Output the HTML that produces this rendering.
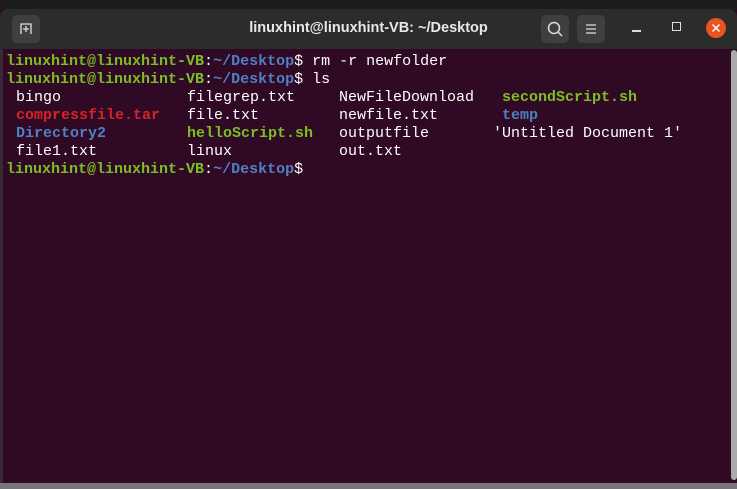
<!DOCTYPE html><html><head><style>
body{margin:0;width:737px;height:489px;overflow:hidden;background:#300a24;position:relative;font-family:"Liberation Sans",sans-serif}
.top{position:absolute;left:0;top:0;width:737px;height:9px;background:#1d1d1d}
.tb{position:absolute;left:0;top:9px;width:737px;height:40px;background:#2c2c2c;border-radius:8px 8px 0 0}
.title{position:absolute;left:0;width:737px;top:20px;text-align:center;color:#e8e8e8;font-weight:bold;font-size:14.5px}
.btn{position:absolute;top:15px;width:28px;height:28px;background:#3f3f3f;border-radius:5px}
.t{position:absolute;left:6px;font-family:"Liberation Mono",monospace;font-size:15px;color:#fff;white-space:pre;line-height:18px}
.t span{position:absolute}
.l span{position:static}
.g{color:#7bbd25;font-weight:bold}.b{color:#4f7fc4;font-weight:bold}.r{color:#d4242a;font-weight:bold}
</style></head><body>
<div class="top"></div>
<div class="tb"></div>
<div class="btn" style="left:12px;top:15px"><svg width="28" height="28"><path d="M9 19V9h10v10M14 11v6M11 14h6" stroke="#ddd" stroke-width="1.3" fill="none"/></svg></div>
<div class="title">linuxhint@linuxhint-VB: ~/Desktop</div>
<div class="btn" style="left:541px"><svg width="28" height="28"><circle cx="13" cy="13" r="5.5" stroke="#ddd" stroke-width="1.5" fill="none"/><path d="M17 17l4 4" stroke="#ddd" stroke-width="1.5"/></svg></div>
<div class="btn" style="left:577px"><svg width="28" height="28"><path d="M9 10h10M9 14h10M9 18h10" stroke="#ddd" stroke-width="1.3"/></svg></div>
<div style="position:absolute;left:632px;top:30px;width:9px;height:1.5px;background:#ddd"></div>
<div style="position:absolute;left:672px;top:22px;width:7px;height:7px;border:1.3px solid #ddd"></div>
<div style="position:absolute;left:706px;top:18px;width:20px;height:20px;border-radius:50%;background:#e95420"><svg width="20" height="20"><path d="M6.5 6.5l7 7M13.5 6.5l-7 7" stroke="#fff" stroke-width="1.5"/></svg></div>
<div class="t l" style="top:53px"><span class="g">linuxhint@linuxhint-VB</span>:<span class="b">~/Desktop</span>$ rm -r newfolder</div>
<div class="t l" style="top:71px"><span class="g">linuxhint@linuxhint-VB</span>:<span class="b">~/Desktop</span>$ ls</div>
<div class="t" style="top:89px;left:0"><span style="left:16px">bingo</span><span style="left:187px">filegrep.txt</span><span style="left:339px">NewFileDownload</span><span class="g" style="left:502px">secondScript.sh</span></div>
<div class="t" style="top:107px;left:0"><span class="r" style="left:16px">compressfile.tar</span><span style="left:187px">file.txt</span><span style="left:339px">newfile.txt</span><span class="b" style="left:502px">temp</span></div>
<div class="t" style="top:125px;left:0"><span class="b" style="left:16px">Directory2</span><span class="g" style="left:187px">helloScript.sh</span><span style="left:339px">outputfile</span><span style="left:493px">'Untitled Document 1'</span></div>
<div class="t" style="top:143px;left:0"><span style="left:16px">file1.txt</span><span style="left:187px">linux</span><span style="left:339px">out.txt</span></div>
<div class="t l" style="top:161px"><span class="g">linuxhint@linuxhint-VB</span>:<span class="b">~/Desktop</span>$</div>
<div style="position:absolute;left:731px;top:50px;width:6px;height:430px;background:#aaa;border-radius:3px"></div>
<div style="position:absolute;left:0;top:483px;width:737px;height:6px;background:#777"></div>
<div style="position:absolute;left:0;top:49px;width:3px;height:434px;background:#3a2a35"></div>
</body></html>
